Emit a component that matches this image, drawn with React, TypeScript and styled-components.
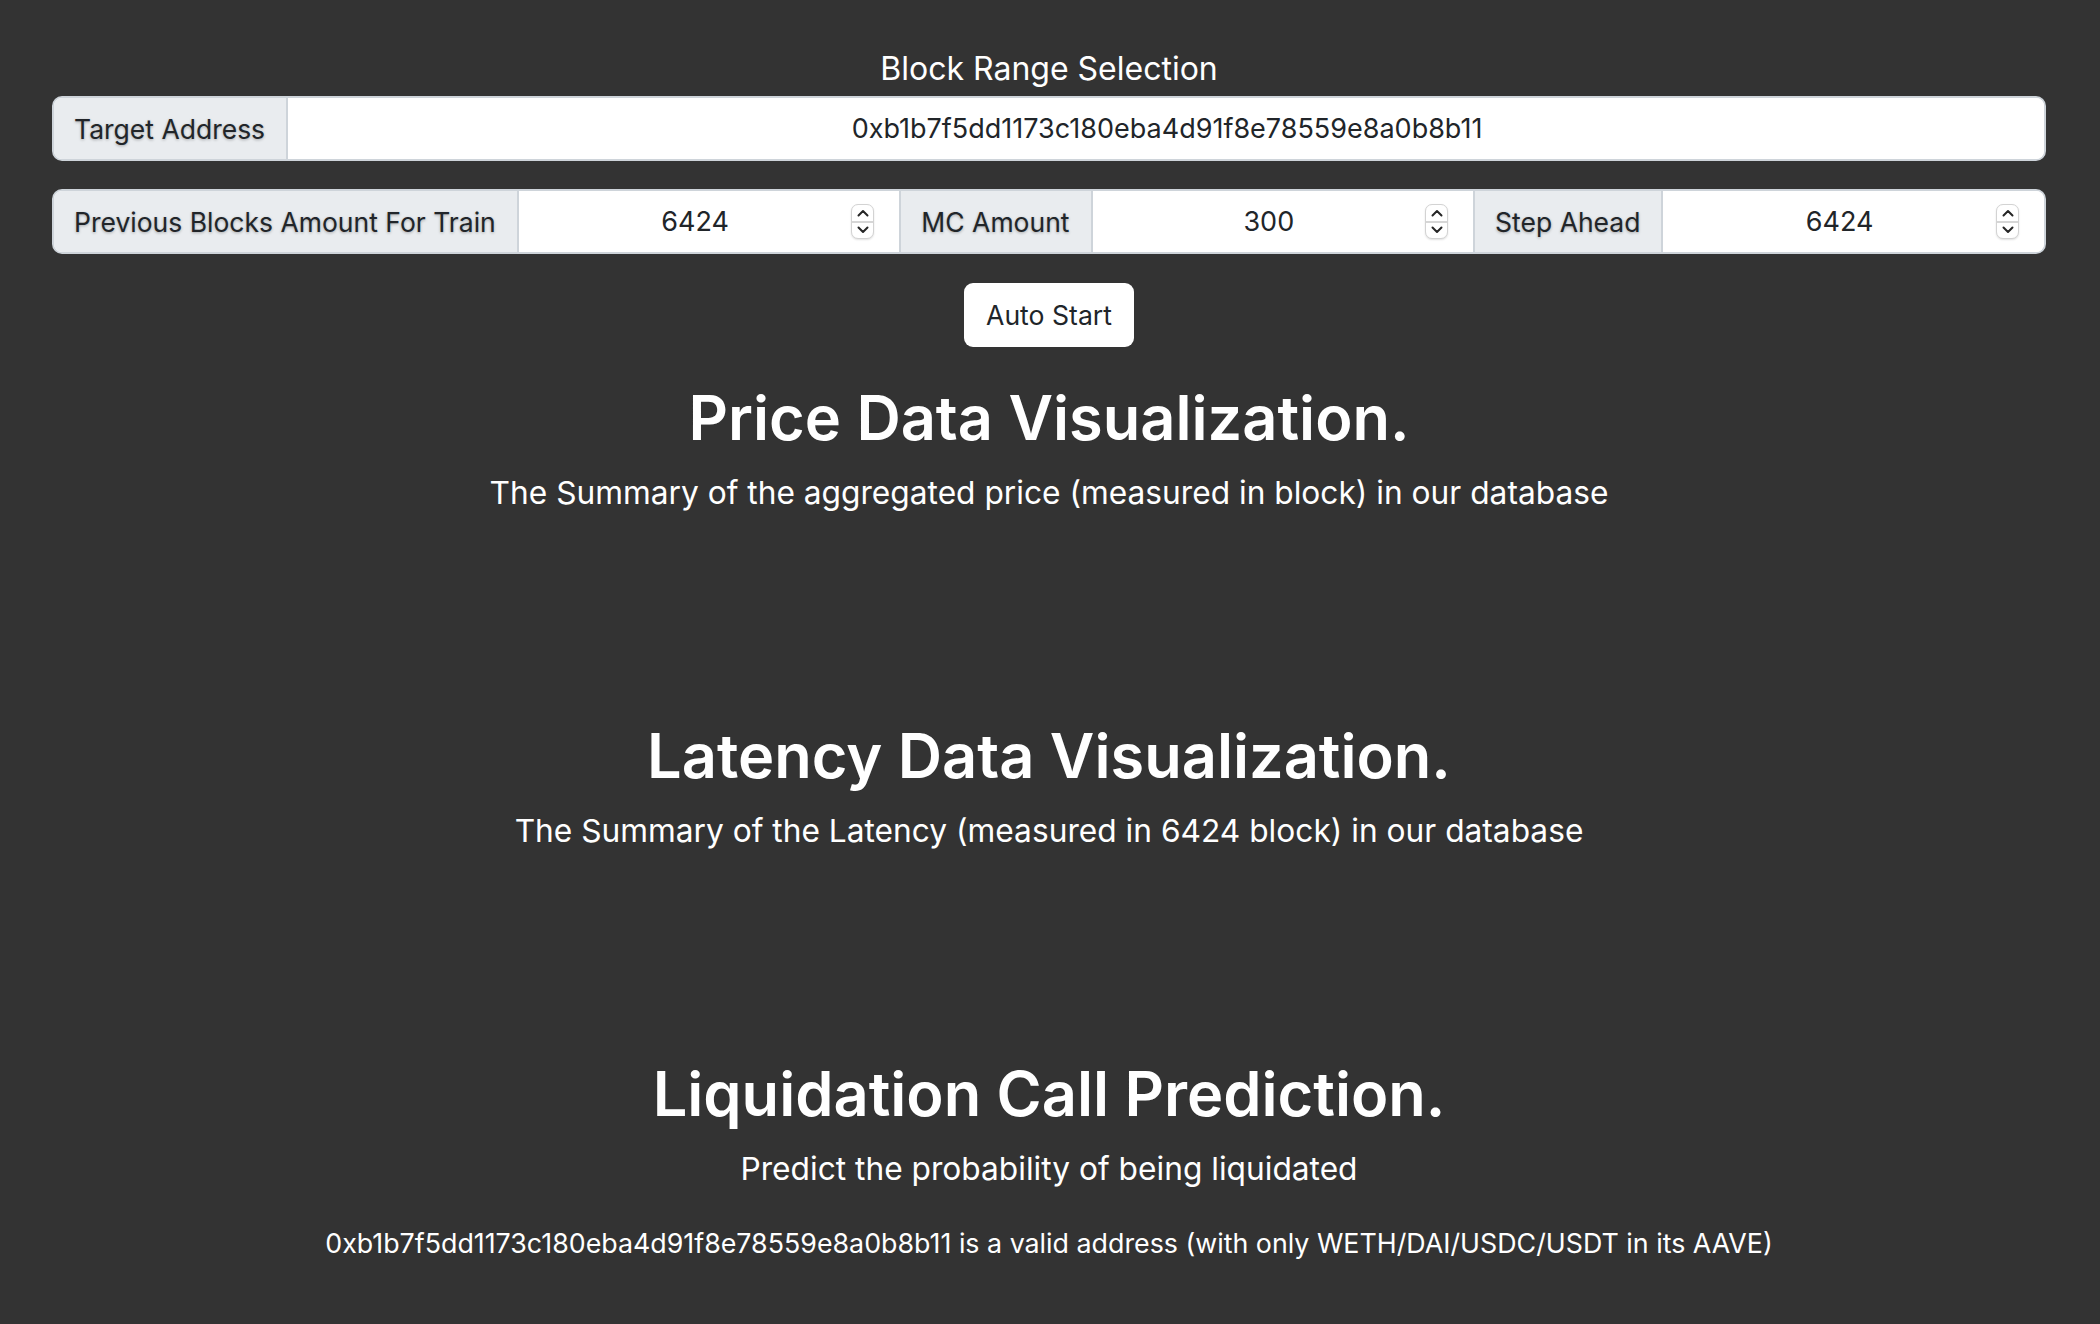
import React from "react";
import styled, { createGlobalStyle } from "styled-components";

const ADDRESS = "0xb1b7f5dd1173c180eba4d91f8e78559e8a0b8b11";

const GlobalStyle = createGlobalStyle`
  body {
    margin: 0;
    background: #333333;
    color: #ffffff;
    font-family: Inter, "Noto Sans", sans-serif;
  }
`;

const Page = styled.main`
  display: flex;
  flex-direction: column;
  padding: 50px 54px 40px 52px;
`;

const PanelTitle = styled.h4`
  margin: 0 0 8px;
  font-size: 32px;
  line-height: 38px;
  font-weight: 400;
  text-align: center;
`;

const InputGroup = styled.div<{ $gap: number }>`
  display: flex;
  height: 65px;
  box-sizing: border-box;
  margin-bottom: ${(p) => p.$gap}px;
  border: 2px solid #ced4da;
  border-radius: 10px;
  overflow: hidden;
  background: #ffffff;
`;

const GroupLabel = styled.span`
  display: flex;
  align-items: center;
  flex: none;
  padding: 0 21px 0 20px;
  background: #e9ecef;
  color: #212529;
  font-size: 26.5px;
  white-space: nowrap;
  text-shadow: 0 1px 3px rgba(0, 0, 0, 0.3);
  &:not(:last-child) {
    border-right: 2px solid #ced4da;
  }
  & + div {
    padding-left: 22px;
  }
`;

const Field = styled.div<{ $spinner?: boolean }>`
  display: flex;
  align-items: center;
  gap: 2px;
  flex: 1 1 0;
  min-width: 0;
  padding: 0 ${(p) => (p.$spinner ? 25 : 20)}px 0 20px;
  background: #ffffff;
  &:not(:last-child) {
    border-right: 2px solid #ced4da;
  }
`;

const FieldInput = styled.input`
  flex: 1;
  min-width: 0;
  padding: 0;
  border: none;
  outline: none;
  background: transparent;
  color: #212529;
  font-family: Inter, "Noto Sans", sans-serif;
  font-size: 27px;
  text-align: center;
`;

const Spinner = styled.div`
  display: flex;
  flex-direction: column;
  flex: none;
  width: 23px;
  height: 35px;
  box-sizing: border-box;
  border: 1px solid #d3d3d3;
  border-radius: 7px;
  background: #ffffff;
  box-shadow: 0 1px 2px rgba(0, 0, 0, 0.12);
  overflow: hidden;
`;

const SpinHalf = styled.span`
  display: flex;
  align-items: center;
  justify-content: center;
  flex: 1;
  &:first-child {
    border-bottom: 2px solid #d6d6d6;
  }
`;

const Chevron = ({ up }: { up?: boolean }) => (
  <svg width="12" height="8" viewBox="0 0 12 8">
    <polyline
      points={up ? "1.5,6.5 6,2 10.5,6.5" : "1.5,1.5 6,6 10.5,1.5"}
      fill="none"
      stroke="#262626"
      strokeWidth="2"
      strokeLinecap="round"
      strokeLinejoin="round"
    />
  </svg>
);

const NumberField = ({ value }: { value: number }) => (
  <Field $spinner>
    <FieldInput type="text" defaultValue={value} />
    <Spinner>
      <SpinHalf>
        <Chevron up />
      </SpinHalf>
      <SpinHalf>
        <Chevron />
      </SpinHalf>
    </Spinner>
  </Field>
);

const Actions = styled.div`
  display: flex;
  justify-content: center;
  margin: 0 0 35px;
`;

const Button = styled.button`
  height: 64px;
  padding: 0 22px;
  border: none;
  border-radius: 9px;
  background: #ffffff;
  color: #212529;
  font-family: Inter, "Noto Sans", sans-serif;
  font-size: 26.6px;
  cursor: pointer;
`;

const Section = styled.section`
  display: flex;
  flex-direction: column;
  align-items: center;
  text-align: center;
`;

const Heading = styled.h2`
  margin: 0;
  font-size: 61.3px;
  line-height: 1.2;
  font-weight: 600;
`;

const Lead = styled.p`
  margin: 13px 0 0;
  font-size: 31.7px;
  line-height: 1.5;
`;

const ChartArea = styled.div`
  align-self: stretch;
  height: 204px;
`;

const Result = styled.p`
  margin: 31px 0 0;
  font-size: 26.8px;
  line-height: 1.5;
`;

export default function App() {
  return (
    <>
      <GlobalStyle />
      <Page>
        <PanelTitle>Block Range Selection</PanelTitle>
        <InputGroup $gap={28}>
          <GroupLabel>Target Address</GroupLabel>
          <Field>
            <FieldInput type="text" defaultValue={ADDRESS} />
          </Field>
        </InputGroup>
        <InputGroup $gap={29}>
          <GroupLabel>Previous Blocks Amount For Train</GroupLabel>
          <NumberField value={6424} />
          <GroupLabel>MC Amount</GroupLabel>
          <NumberField value={300} />
          <GroupLabel>Step Ahead</GroupLabel>
          <NumberField value={6424} />
        </InputGroup>
        <Actions>
          <Button>Auto Start</Button>
        </Actions>

        <Section>
          <Heading>Price Data Visualization.</Heading>
          <Lead>The Summary of the aggregated price (measured in block) in our database</Lead>
          <ChartArea />
        </Section>

        <Section>
          <Heading>Latency Data Visualization.</Heading>
          <Lead>The Summary of the Latency (measured in 6424 block) in our database</Lead>
          <ChartArea />
        </Section>

        <Section>
          <Heading>Liquidation Call Prediction.</Heading>
          <Lead>Predict the probability of being liquidated</Lead>
          <Result>
            {ADDRESS} is a valid address (with only WETH/DAI/USDC/USDT in its AAVE)
          </Result>
        </Section>
      </Page>
    </>
  );
}
